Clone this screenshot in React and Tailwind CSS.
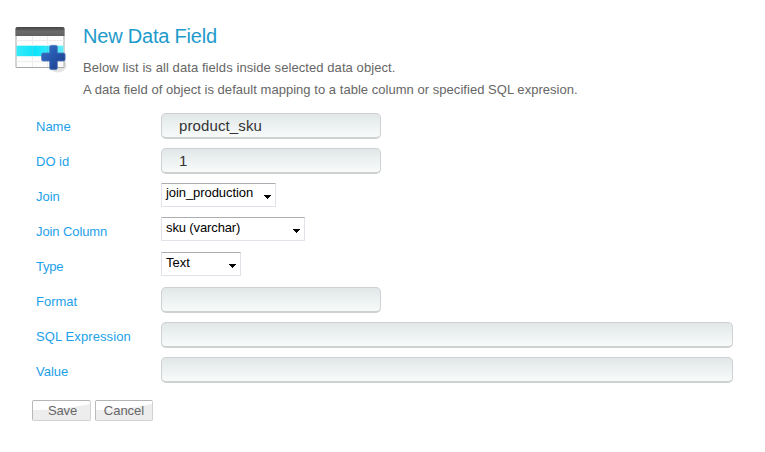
const fields = [
  { label: 'Name', kind: 'input', value: 'product_sku', size: 'w-[220px]', track: 'tracking-[0.12px]' },
  { label: 'DO id', kind: 'input', value: '1', size: 'w-[220px]' },
  { label: 'Join', kind: 'select', value: 'join_production', size: 'w-[115px]', track: 'tracking-[-0.07px]' },
  { label: 'Join Column', kind: 'select', value: 'sku (varchar)', size: 'w-[144px]', track: 'tracking-[-0.12px]', lift: true, labelTrack: 'tracking-[-0.1px]' },
  { label: 'Type', kind: 'select', value: 'Text', size: 'w-[80px]', lift: true, labelTrack: 'tracking-[-0.2px]' },
  { label: 'Format', kind: 'input', value: '', size: 'w-[220px]', lift: true },
  { label: 'SQL Expression', kind: 'input', value: '', size: 'w-[572px]', lift: true, labelTrack: 'tracking-[0.1px]' },
  { label: 'Value', kind: 'input', value: '', size: 'w-[572px]', lift: true },
];

function TableIcon() {
  return (
    <svg width="56" height="50" viewBox="0 0 56 50" className="shrink-0">
      <defs>
        <linearGradient id="head" x1="0" y1="0" x2="0" y2="1">
          <stop offset="0" stopColor="#454545" />
          <stop offset="0.5" stopColor="#6a6a6a" />
          <stop offset="1" stopColor="#606060" />
        </linearGradient>
        <linearGradient id="row" x1="0" y1="0" x2="1" y2="0">
          <stop offset="0" stopColor="#35e9f8" />
          <stop offset="0.4" stopColor="#0ce4fb" />
          <stop offset="1" stopColor="#65eefa" />
        </linearGradient>
        <linearGradient id="plus" x1="0" y1="0" x2="1" y2="1">
          <stop offset="0" stopColor="#3a70c8" />
          <stop offset="0.5" stopColor="#2456ac" />
          <stop offset="1" stopColor="#223a80" />
        </linearGradient>
      </defs>
      <ellipse cx="45" cy="41" rx="8.500" ry="7.500" fill="#d9d9d9" opacity="0.7" />
      <rect x="2.500" y="3" width="49" height="41" rx="1.500" fill="#a8a8a8" />
      <rect x="3.500" y="11" width="47" height="32" fill="#fdfdfd" />
      <path d="M2.500 12V5q0-2 2-2h45q2 0 2 2v7z" fill="url(#head)" />
      <path d="M3.500 16.500h47M3.500 37.500h47" stroke="#ededed" />
      <rect x="3.500" y="21.700" width="47" height="10.500" fill="url(#row)" />
      <path d="M19.500 12v9.500M34.500 12v9.500M19.500 33v10M34.500 33v10" stroke="#ededed" />
      <path d="M19.500 22v10M34.500 22v10" stroke="#35d9ed" />
      <path
        d="M38.300 21.400h4.400q1.600 0 1.600 1.600v6h6.200q1.600 0 1.600 1.600v4.800q0 1.600-1.600 1.600h-6.200v7q0 1.600-1.600 1.600h-4.400q-1.600 0-1.600-1.600v-7h-6.500q-1.600 0-1.600-1.600v-4.800q0-1.600 1.600-1.600h6.500v-6q0-1.600 1.600-1.600z"
        fill="url(#plus)"
        stroke="#4a74b8"
        strokeWidth="0.8"
      />
    </svg>
  );
}

function TextBox({ value, size, track = '' }) {
  return (
    <input
      defaultValue={value}
      className={`${size} ${track} h-[26px] rounded-[5px] border border-b-2 border-[#cdd1d1] bg-linear-to-b from-[#e1e7e8] to-[#f8fbfa] pl-[17px] text-[15px] text-[#333] outline-none`}
    />
  );
}

function SelectBox({ value, size, track = '', lift }) {
  return (
    <button
      type="button"
      className={`${size} flex h-6 justify-between rounded-[1px] border border-[#e2e3ea] border-t-[#abadb3] bg-white pl-1 pr-1 text-[13px] text-black`}
    >
      <span className={`${track} ${lift ? 'leading-5' : 'leading-[18px]'}`}>{value}</span>
      <svg width="8" height="4" viewBox="0 0 8 4" className="mt-[11px]" shapeRendering="crispEdges">
        <path d="M0 0h8L4 4z" />
      </svg>
    </button>
  );
}

function ActionButton({ children, className }) {
  return (
    <button
      type="button"
      className={`relative h-[21px] overflow-hidden rounded-[2px] border border-[#d2d2d2] border-t-[#b5b5b5] border-l-[#b9b9b9] bg-white text-[13px] leading-[19px] text-[#666] ${className}`}
    >
      <svg
        className="absolute inset-0 h-full w-full"
        viewBox="0 0 58 19"
        preserveAspectRatio="none"
      >
        <path d="M0 9Q28 9 58 3V19H0z" fill="#ededed" />
      </svg>
      <span className="relative">{children}</span>
    </button>
  );
}

export default function App() {
  return (
    <main className="h-[452px] w-[765px] overflow-hidden bg-white font-['Liberation_Sans',Arial,sans-serif]">
      <header className="flex pl-[13px] pt-6">
        <TableIcon />
        <div className="pl-[14px]">
          <h1 className="text-[20px] leading-6 tracking-[-0.2px] text-[#1e9bcb]">New Data Field</h1>
          <p className="mt-[9px] text-[13px] leading-[22px] text-[#666]">
            <span className="tracking-[0.08px]">Below list is all data fields inside selected data object.</span>
            <br />
            <span className="tracking-[0.035px]">
              A data field of object is default mapping to a table column or specified SQL expresion.
            </span>
          </p>
        </div>
      </header>
      <form className="mt-3 pl-9">
        {fields.map((f) => (
          <div key={f.label} className="flex h-[35px] items-start">
            <label className={`w-[125px] text-[13px] leading-[27px] text-[#1ba1ea] ${f.labelTrack ?? ''}`}>
              {f.label}
            </label>
            <div className={f.lift ? '-mt-px flex' : 'flex'}>
              {f.kind === 'input' ? <TextBox {...f} /> : <SelectBox {...f} />}
            </div>
          </div>
        ))}
      </form>
      <div className="mt-[7px] flex gap-1 pl-8">
        <ActionButton className="w-[59px] pl-[2px] tracking-[-0.2px]">Save</ActionButton>
        <ActionButton className="w-[58px]">Cancel</ActionButton>
      </div>
    </main>
  );
}
